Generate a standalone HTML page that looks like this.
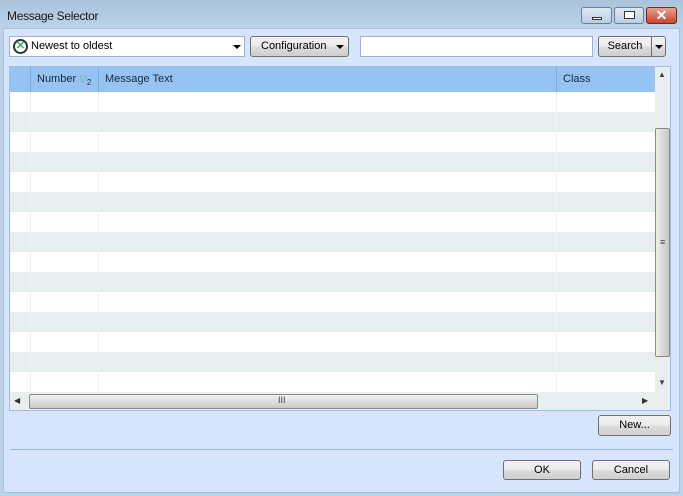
<!DOCTYPE html>
<html><head><style>
*{box-sizing:border-box;margin:0;padding:0}
body{width:683px;height:496px;background:#bcd3e6;font-family:"Liberation Sans",sans-serif;font-size:11px;position:relative;overflow:hidden;color:#000}
.abs{position:absolute}
.title{left:0;top:0;width:683px;height:28px;background:linear-gradient(#a9c3dc,#bcd2e7)}
.client{left:3px;top:28px;width:677px;height:465px;background:#d6e5fb;border:1px solid #a9c3e0}
.btn{background:linear-gradient(#f2f2f2,#ebebeb 50%,#dddddd 50%,#cfcfcf);border:1px solid #707070;border-radius:3px;text-align:center;line-height:19px}
.row{position:absolute;left:0;width:645px;height:20px}
.g{background:#e7eeed}
.tri{width:0;height:0;border-left:4px solid transparent;border-right:4px solid transparent;border-top:4px solid #000;position:absolute}
</style></head><body>
<div class="abs title"></div>
<div class="abs" style="left:7px;top:9px;font-size:12px;color:#1a1a1a;letter-spacing:-0.3px">Message Selector</div>
<div class="abs" style="left:581px;top:7px;width:31px;height:17px;border:1px solid #6b7f97;border-radius:3px;background:linear-gradient(#dfe9f4,#b9cde2)"><div class="abs" style="left:10px;top:9px;width:10px;height:3px;background:#fff;border:1px solid #333"></div></div>
<div class="abs" style="left:614px;top:7px;width:30px;height:17px;border:1px solid #6b7f97;border-radius:3px;background:linear-gradient(#dfe9f4,#b9cde2)"><div class="abs" style="left:9px;top:3px;width:11px;height:8px;background:#fff;border:1px solid #333"></div></div>
<div class="abs" style="left:646px;top:7px;width:31px;height:17px;border:1px solid #6e2b22;border-radius:3px;background:linear-gradient(#e8a090,#c8442e);color:#fff;font-weight:bold;font-size:14px;text-align:center;line-height:15px">✕</div>
<div class="abs client"></div>

<div class="abs" style="left:9px;top:36px;width:236px;height:21px;background:#fff;border:1px solid #9cb3d3"></div>
<div class="abs" style="left:13px;top:39px;width:15px;height:15px;border:2px solid #1f3b3b;border-radius:50%;background:#fff;color:#3bb34a;font-size:11px;font-weight:bold;line-height:11px;text-align:center">✕</div>
<div class="abs" style="left:31px;top:40px">Newest to oldest</div>
<div class="tri" style="left:233px;top:45px"></div>
<div class="abs btn" style="left:250px;top:36px;width:99px;height:21px;text-align:left;padding-left:10px">Configuration</div>
<div class="tri" style="left:336px;top:45px"></div>
<div class="abs" style="left:360px;top:36px;width:233px;height:21px;background:#fff;border:1px solid #9cb3d3"></div>
<div class="abs btn" style="left:598px;top:36px;width:54px;height:21px;border-radius:3px 0 0 3px">Search</div>
<div class="abs btn" style="left:651px;top:36px;width:15px;height:21px;border-radius:0 3px 3px 0"></div>
<div class="tri" style="left:655px;top:45px"></div>

<div class="abs" style="left:9px;top:66px;width:662px;height:345px;border:1px solid #9cc0e8;background:#fff;overflow:hidden">
 <div class="abs" style="left:0;top:0;width:645px;height:25px;background:#95c4f4"></div>
 <div class="abs" style="left:20px;top:0;width:1px;height:25px;background:#8aa8c8"></div>
 <div class="abs" style="left:88px;top:0;width:1px;height:25px;background:#8aa8c8"></div>
 <div class="abs" style="left:546px;top:0;width:1px;height:25px;background:#8aa8c8"></div>
 <div class="abs" style="left:27px;top:6px;color:#1a2a3a">Number <span style="color:#6aa;font-size:10px">▽<sub style="font-size:8px;color:#333">2</sub></span></div>
 <div class="abs" style="left:95px;top:6px;color:#1a2a3a">Message Text</div>
 <div class="abs" style="left:553px;top:6px;color:#1a2a3a">Class</div>
 <div class="row g" style="top:45px"></div><div class="row g" style="top:85px"></div><div class="row g" style="top:125px"></div><div class="row g" style="top:165px"></div><div class="row g" style="top:205px"></div><div class="row g" style="top:245px"></div><div class="row g" style="top:285px"></div>
 <div class="abs" style="left:20px;top:25px;width:1px;height:300px;background:#eaf2fc"></div>
 <div class="abs" style="left:88px;top:25px;width:1px;height:300px;background:#eaf2fc"></div>
 <div class="abs" style="left:546px;top:25px;width:1px;height:300px;background:#eaf2fc"></div>
 <div class="abs" style="left:645px;top:0;width:16px;height:325px;background:#e8efee"></div>
 <div class="abs" style="left:648px;top:3px;font-size:8px;color:#444">▲</div>
 <div class="abs" style="left:648px;top:311px;font-size:8px;color:#444">▼</div>
 <div class="abs" style="left:645px;top:61px;width:15px;height:229px;border:1px solid #8a8a8a;border-radius:2px;background:linear-gradient(90deg,#f0f0f0,#d8d8d8 50%,#c8c8c8)"></div>
 <div class="abs" style="left:650px;top:170px;font-size:9px;color:#444">≡</div>
 <div class="abs" style="left:0;top:325px;width:661px;height:18px;background:#e8efee"></div>
 <div class="abs" style="left:4px;top:329px;font-size:8px;color:#333">◀</div>
 <div class="abs" style="left:632px;top:329px;font-size:8px;color:#333">▶</div>
 <div class="abs" style="left:19px;top:327px;width:509px;height:15px;border:1px solid #8a8a8a;border-radius:2px;background:linear-gradient(#f2f2f2,#dcdcdc 50%,#c8c8c8)"></div>
 <div class="abs" style="left:268px;top:328px;font-size:9px;color:#444">III</div>
</div>

<div class="abs btn" style="left:598px;top:415px;width:73px;height:21px">New...</div>
<div class="abs" style="left:10px;top:449px;width:663px;height:1px;background:#9ab5de"></div>
<div class="abs btn" style="left:503px;top:460px;width:78px;height:20px">OK</div>
<div class="abs btn" style="left:592px;top:460px;width:78px;height:20px">Cancel</div>
</body></html>
